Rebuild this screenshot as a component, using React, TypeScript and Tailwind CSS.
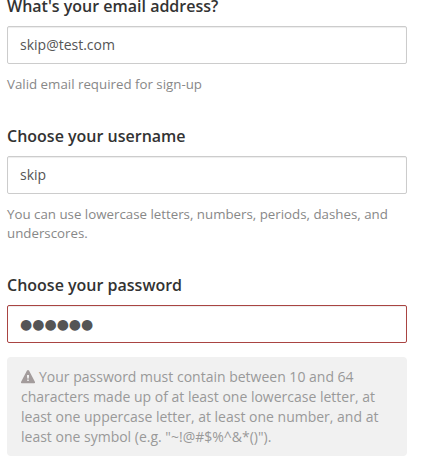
import clsx from "clsx";

type FieldProps = {
  id: string;
  label: string;
  value: string;
  masked?: boolean;
  invalid?: boolean;
};

function Field({ id, label, value, masked, invalid }: FieldProps) {
  return (
    <>
      <label htmlFor={id} className="block text-base leading-5 font-semibold text-[#333]">
        {label}
      </label>
      <input
        id={id}
        type="text"
        defaultValue={masked ? "●".repeat(value.length) : value}
        className={clsx(
          "mt-2.5 block h-[38px] w-full rounded-xs border bg-white px-3 text-sm text-[#555] shadow-[inset_0_1px_1px_rgba(0,0,0,0.075)] outline-none",
          masked ? "font-['DejaVu_Sans',sans-serif]" : "pb-0.5",
          invalid ? "border-[#a94442]" : "border-[#ccc]"
        )}
      />
    </>
  );
}

function WarningIcon() {
  return (
    <svg viewBox="0 0 14 14" className="mr-1 inline size-3.5 align-[-2px]" fill="#a39c9c">
      <path
        fillRule="evenodd"
        d="M6 .6Q7 -.4 8 .6L14 12Q14.2 13.2 13.4 13.2H.6Q-.2 13.2 0 12ZM6 5V7L6.5 8.7H7.5L8 7V5ZM6.2 9.6V11H7.8V9.6Z"
      />
    </svg>
  );
}

export default function App() {
  return (
    <div className="h-[475px] overflow-hidden bg-white font-['Open_Sans',sans-serif]">
      <form className="-mt-1 w-[407px] pl-[7px]">
        <Field id="email" label="What's your email address?" value="skip@test.com" />
        <p className="mt-[11px] text-[13.3px] leading-[19px] text-[#888]">
          Valid email required for sign-up
        </p>

        <div className="mt-8">
          <Field id="username" label="Choose your username" value="skip" />
          <p className="mt-[11px] text-[13.3px] leading-[19px] whitespace-nowrap text-[#888]">
            You can use lowercase letters, numbers, periods, dashes, and
            <br />
            underscores.
          </p>
        </div>

        <div className="mt-8">
          <Field id="password" label="Choose your password" value="secret" masked invalid />
          <div className="mt-3.5 rounded-sm bg-[#f1f1f1] px-3.5 pt-2.5 pb-[9px] text-sm leading-5 whitespace-nowrap text-[#999]">
            <WarningIcon />
            Your password must contain between 10 and 64
            <br />
            characters made up of at least one lowercase letter, at
            <br />
            least one uppercase letter, at least one number, and at
            <br />
            least one symbol (e.g. "~!@#$%^&*()").
          </div>
        </div>
      </form>
    </div>
  );
}
